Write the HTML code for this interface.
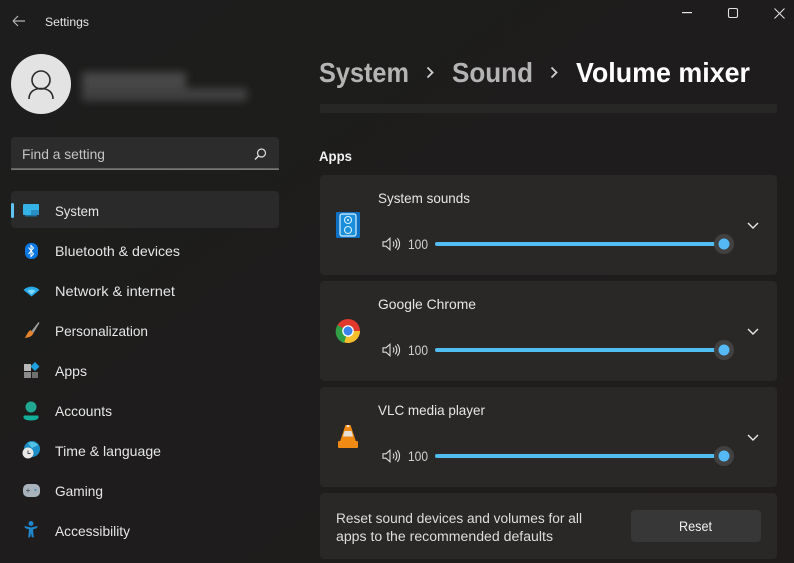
<!DOCTYPE html>
<html><head><meta charset="utf-8"><style>
html,body{margin:0;padding:0;background:#1c1c1c;width:794px;height:563px;overflow:hidden}
svg{display:block;filter:blur(0.35px)}
text{font-family:"Liberation Sans",sans-serif;fill:#e6e6e6}
.n{font-size:14px}
.h{font-size:28px;font-weight:bold}
</style></head><body>
<svg width="794" height="563" viewBox="0 0 794 563" xmlns="http://www.w3.org/2000/svg">
<defs>
<filter id="b" x="-20%" y="-50%" width="140%" height="200%"><feGaussianBlur stdDeviation="4"/></filter>
<linearGradient id="bg" x1="0" x2="1" y1="0" y2="1"><stop offset="0" stop-color="#1c1d1c"/><stop offset="1" stop-color="#201c1c"/></linearGradient>
<symbol id="vol" viewBox="0 0 18 14" overflow="visible"><path d="M1 4.8h3L8 1.2v11.600L4 9.200H1z M11 4.500c1.200 1.400 1.200 3.600 0 5 M13.200 2.800c2.200 2.400 2.200 6 0 8.400 M15.300 1.200c3 3.200 3 8.400 0 11.600" fill="none" stroke="#dcdcdc" stroke-width="1.100"/></symbol>
<symbol id="chev" viewBox="0 0 12 7" overflow="visible"><path d="M1 1l5 5 5-5" fill="none" stroke="#e8e8e8" stroke-width="1.400"/></symbol>
</defs>
<rect width="794" height="563" fill="url(#bg)"/>

<!-- title bar -->
<path d="M13 21h12M13 21l5-5M13 21l5 5" fill="none" stroke="#b4b4b4" stroke-width="1.200"/>
<text x="45" y="26" font-size="11.500" textLength="44" lengthAdjust="spacingAndGlyphs">Settings</text>
<rect x="682" y="12" width="10" height="1.200" fill="#e6e6e6"/>
<rect x="728.500" y="8.500" width="9" height="9" rx="1.500" fill="none" stroke="#e0e0e0" stroke-width="1.100"/>
<path d="M774.500 8.500l10 10M784.500 8.500l-10 10" fill="none" stroke="#dcdcdc" stroke-width="1.100"/>

<!-- profile -->
<circle cx="41" cy="84" r="30" fill="#e3e3e3"/>
<circle cx="41" cy="80" r="9" fill="none" stroke="#2a2a2a" stroke-width="1.600"/>
<path d="M29 99c0-7 5-10.500 12-10.500s12 3.500 12 10.500" fill="none" stroke="#2a2a2a" stroke-width="1.600"/>
<g filter="url(#b)">
<rect x="82" y="72" width="104" height="16" fill="#464646"/>
<rect x="82" y="88" width="165" height="13" fill="#3f3f3f"/>
</g>

<!-- search -->
<rect x="11" y="137" width="268" height="33" rx="4" fill="#2c2c2c"/>
<rect x="11" y="168.500" width="268" height="1.200" fill="#9a9a9a"/>
<text x="22" y="159" font-size="14" style="fill:#c4c4c4" textLength="83" lengthAdjust="spacingAndGlyphs">Find a setting</text>
<circle cx="261.500" cy="153" r="4" fill="none" stroke="#e0e0e0" stroke-width="1.200"/>
<path d="M258.500 156l-3.500 3.500" stroke="#e0e0e0" stroke-width="1.400"/>

<!-- nav -->
<rect x="11" y="191" width="268" height="37" rx="4" fill="#2b2a2a"/>
<rect x="11" y="203" width="3" height="15" rx="1.500" fill="#5fc4f2"/>
<text class="n" x="55" y="216" textLength="44" lengthAdjust="spacingAndGlyphs">System</text>
<text class="n" x="55" y="256" textLength="125" lengthAdjust="spacingAndGlyphs">Bluetooth &amp; devices</text>
<text class="n" x="55" y="296" textLength="120" lengthAdjust="spacingAndGlyphs">Network &amp; internet</text>
<text class="n" x="55" y="336" textLength="93" lengthAdjust="spacingAndGlyphs">Personalization</text>
<text class="n" x="55" y="376" textLength="32" lengthAdjust="spacingAndGlyphs">Apps</text>
<text class="n" x="55" y="416" textLength="57" lengthAdjust="spacingAndGlyphs">Accounts</text>
<text class="n" x="55" y="456" textLength="106" lengthAdjust="spacingAndGlyphs">Time &amp; language</text>
<text class="n" x="55" y="496" textLength="48" lengthAdjust="spacingAndGlyphs">Gaming</text>
<text class="n" x="55" y="536" textLength="75" lengthAdjust="spacingAndGlyphs">Accessibility</text>

<!-- nav icons -->
<rect x="23" y="204" width="16" height="11" rx="1" fill="#35b3e6"/>
<rect x="31" y="210" width="8" height="5" fill="#2a8fc4"/>
<rect x="25" y="215" width="12" height="1.500" fill="#1b6f9e"/>
<rect x="25" y="243" width="13" height="16" rx="6" fill="#0a78e0"/>
<path d="M28.500 247.500l5 6.500-2.500 2.500v-11l2.500 2.500-5 6" fill="none" stroke="#fff" stroke-width="1"/>
<path d="M23.500 290c4.500-4.500 11.500-4.500 16 0l-8 6.500z" fill="#28a9ea"/>
<path d="M27.500 291c2.500-1.800 5.500-1.800 8 0l-4 3.500z" fill="#7fd8f8"/>
<path d="M38.500 322l-7 9 2 2 6-10z" fill="#9c9c9c"/>
<path d="M30.500 330l3 3c-1 3-4 4.500-9 5 2-1.500 2-5 6-8z" fill="#e5842c"/>
<rect x="24" y="364" width="7" height="7" fill="#b8b8b8"/>
<rect x="24" y="372" width="7" height="6" fill="#8b8b8b"/>
<rect x="32" y="372" width="6" height="6" fill="#6f6f6f"/>
<path d="M35 362l4.500 4.500-4.500 4.500-4.500-4.500z" fill="#1e9fe0"/>
<circle cx="31" cy="407" r="5.500" fill="#20a890"/>
<path d="M24.500 415.500h13c1 0 1 1 1 2 0 1.500-3 3-7.500 3s-7.500-1.500-7.500-3c0-1 0-2 1-2z" fill="#12b09a"/>
<circle cx="32" cy="449" r="8" fill="#1d8fc6"/>
<path d="M28 443a8 8 0 0 1 10 2l-6 3z" fill="#55c3e6"/>
<circle cx="28" cy="453" r="5.500" fill="#e8e8e8"/>
<path d="M28 450.500v3h2.500" fill="none" stroke="#444" stroke-width="0.900"/>
<rect x="23" y="484" width="17" height="13" rx="5" fill="#a9b3bb"/>
<path d="M26 490.500h4M28 488.500v4" stroke="#55606a" stroke-width="0.900"/>
<circle cx="35.500" cy="490" r="1.100" fill="#4f8fb8"/>
<circle cx="31" cy="523.500" r="2.500" fill="#1f86cc"/>
<path d="M24.500 526l6.500 1.500 6.500-1.500-.5 2-4 1.500.8 8-2-.2-.8-4.300-.8 4.300-2 .2.800-8-4-1.500z" fill="#1f86cc"/>

<!-- breadcrumb -->
<text class="h" x="319" y="82" style="fill:#b4b4b4" textLength="90" lengthAdjust="spacingAndGlyphs">System</text>
<path d="M427.500 67.500l5 5-5 5" fill="none" stroke="#d0d0d0" stroke-width="1.800"/>
<text class="h" x="452" y="82" style="fill:#b4b4b4" textLength="81" lengthAdjust="spacingAndGlyphs">Sound</text>
<path d="M551.500 67.500l5 5-5 5" fill="none" stroke="#d0d0d0" stroke-width="1.800"/>
<text class="h" x="576" y="82" style="fill:#fff" textLength="174" lengthAdjust="spacingAndGlyphs">Volume mixer</text>

<!-- top strip -->
<rect x="320" y="104" width="457" height="9" rx="2" fill="#272726"/>
<text x="319" y="161" font-size="13.500" font-weight="bold" style="fill:#f2f2f2" textLength="33" lengthAdjust="spacingAndGlyphs">Apps</text>

<!-- cards -->
<rect x="320" y="175" width="457" height="100" rx="4" fill="#292827"/>
<rect x="320" y="281" width="457" height="100" rx="4" fill="#292827"/>
<rect x="320" y="387" width="457" height="100" rx="4" fill="#292827"/>
<rect x="320" y="493" width="457" height="66" rx="4" fill="#292827"/>

<text class="n" x="378" y="203" textLength="92" lengthAdjust="spacingAndGlyphs">System sounds</text>
<text class="n" x="378" y="309" textLength="98" lengthAdjust="spacingAndGlyphs">Google Chrome</text>
<text class="n" x="378" y="415" textLength="107" lengthAdjust="spacingAndGlyphs">VLC media player</text>

<!-- system sounds icon -->
<rect x="336" y="212" width="24" height="26" rx="1" fill="#0f71c4"/>
<rect x="340" y="214" width="16" height="22" rx="2" fill="#1b8fda" stroke="#d5f1ff" stroke-width="1.200"/>
<circle cx="348" cy="220" r="3.500" fill="none" stroke="#d5f1ff" stroke-width="1.100"/>
<circle cx="348" cy="230" r="3.500" fill="none" stroke="#d5f1ff" stroke-width="1.100"/>
<circle cx="348" cy="220" r="1" fill="#d5f1ff"/>

<!-- chrome icon -->
<circle cx="348" cy="331" r="12" fill="#e0392c"/>
<path d="M348 331l12 0a12 12 0 0 1 -16 11.300l-1 .7z" fill="#f5c02b"/>
<path d="M348 331l-4 12a12 12 0 0 1 -6.400 -18z" fill="#2f9e44"/>
<circle cx="348" cy="331" r="5.800" fill="#fff"/>
<circle cx="348" cy="331" r="4.500" fill="#3b82ea"/>

<!-- vlc icon -->
<path d="M345.500 425h5l6 18h-17z" fill="#f08a14"/>
<path d="M344.500 431h7l1.500 5.500h-10z" fill="#e6e0d8"/>
<path d="M347 425h2l.5 2h-3z" fill="#f4e4d0"/>
<rect x="338" y="441" width="20" height="7" rx="1" fill="#ef8a14"/>

<!-- volume rows -->
<use href="#vol" x="382" y="237" width="18" height="14"/>
<use href="#vol" x="382" y="343" width="18" height="14"/>
<use href="#vol" x="382" y="449" width="18" height="14"/>
<text x="408" y="249" font-size="14" style="fill:#cfcfcf" textLength="20" lengthAdjust="spacingAndGlyphs">100</text>
<text x="408" y="355" font-size="14" style="fill:#cfcfcf" textLength="20" lengthAdjust="spacingAndGlyphs">100</text>
<text x="408" y="461" font-size="14" style="fill:#cfcfcf" textLength="20" lengthAdjust="spacingAndGlyphs">100</text>

<rect x="435" y="242" width="289" height="4" rx="2" fill="#52bdf0"/>
<rect x="435" y="348" width="289" height="4" rx="2" fill="#52bdf0"/>
<rect x="435" y="454" width="289" height="4" rx="2" fill="#52bdf0"/>
<g>
<circle cx="724" cy="244" r="10" fill="#414141"/><circle cx="724" cy="244" r="5.500" fill="#54b9f5"/>
<circle cx="724" cy="350" r="10" fill="#414141"/><circle cx="724" cy="350" r="5.500" fill="#54b9f5"/>
<circle cx="724" cy="456" r="10" fill="#414141"/><circle cx="724" cy="456" r="5.500" fill="#54b9f5"/>
</g>

<use href="#chev" x="747" y="222" width="12" height="7"/>
<use href="#chev" x="747" y="328" width="12" height="7"/>
<use href="#chev" x="747" y="434" width="12" height="7"/>

<!-- reset -->
<text x="336" y="523" font-size="13.500" textLength="246" lengthAdjust="spacingAndGlyphs" style="fill:#dedede">Reset sound devices and volumes for all</text>
<text x="336" y="541" font-size="13.500" textLength="217" lengthAdjust="spacingAndGlyphs" style="fill:#dedede">apps to the recommended defaults</text>
<rect x="631" y="510" width="130" height="32" rx="4" fill="#373737"/>
<text class="n" x="679" y="531" textLength="33" lengthAdjust="spacingAndGlyphs" style="fill:#f0f0f0">Reset</text>
</svg>
</body></html>
